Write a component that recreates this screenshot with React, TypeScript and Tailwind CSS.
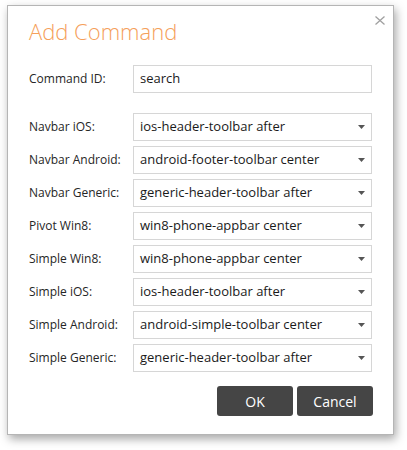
const ROWS: [string, string][] = [
  ['Navbar iOS:', 'ios-header-toolbar after'],
  ['Navbar Android:', 'android-footer-toolbar center'],
  ['Navbar Generic:', 'generic-header-toolbar after'],
  ['Pivot Win8:', 'win8-phone-appbar center'],
  ['Simple Win8:', 'win8-phone-appbar center'],
  ['Simple iOS:', 'ios-header-toolbar after'],
  ['Simple Android:', 'android-simple-toolbar center'],
  ['Simple Generic:', 'generic-header-toolbar after'],
]

function Select({ value }: { value: string }) {
  return (
    <div className="flex h-[28px] w-[239px] items-center justify-between border border-[#d6d6d6] bg-white pl-[6px] pr-[6px] text-[13px] text-[#1a1a1a]">
      <span>{value}</span>
      <svg width="7" height="4" viewBox="0 0 7 4" className="mt-[-1px]">
        <path d="M0 0h7L3.5 4z" fill="#555" />
      </svg>
    </div>
  )
}

export default function App() {
  return (
    <div className="h-[450px] w-[407px] bg-white pl-[7px] pt-[5px]" style={{ fontFamily: '"Open Sans", "Noto Sans", sans-serif' }}>
      <div className="relative flex h-[430px] w-[387px] flex-col border border-[#b5b5b5] bg-white pl-[21px] pr-[20px] shadow-[2px_4px_9px_rgba(0,0,0,0.35)]">
        {/* close */}
        <button className="absolute right-[8px] top-[9px] flex h-[10px] w-[10px] items-center justify-center">
          <svg width="10" height="9" viewBox="0 0 10 9">
            <path d="M0.5 0.5l9 8M9.5 0.5l-9 8" stroke="#a0a0a0" strokeWidth="1.3" />
          </svg>
        </button>

        <h2 className="mt-[10px] text-[22px] font-light leading-[30px] text-[#f5a05a]">Add Command</h2>

        <div className="mt-[19px] flex items-center">
          <label className="w-[104px] text-[12px] text-[#262626]">Command ID:</label>
          <div className="flex h-[28px] w-[239px] items-center border border-[#d6d6d6] pl-[6px] text-[13px] text-[#1a1a1a]">search</div>
        </div>

        <div className="mt-[20px] flex flex-col gap-[5px]">
          {ROWS.map(([label, value]) => (
            <div key={label} className="flex items-center">
              <label className="w-[104px] text-[12px] text-[#262626]">{label}</label>
              <Select value={value} />
            </div>
          ))}
        </div>

        <div className="mt-[14px] flex justify-end gap-[4px]">
          <button className="h-[30px] w-[76px] rounded-[3px] bg-[#454545] text-[14px] text-white">OK</button>
          <button className="h-[30px] w-[76px] rounded-[3px] bg-[#454545] text-[14px] text-white">Cancel</button>
        </div>
      </div>
    </div>
  )
}
